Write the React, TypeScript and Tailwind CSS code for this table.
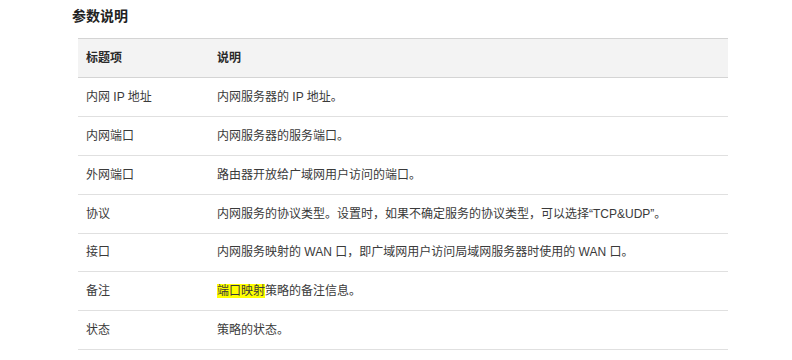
import React from 'react';

type Row = { name: string; desc: React.ReactNode };

const rows: Row[] = [
  { name: '内网 IP 地址', desc: '内网服务器的 IP 地址。' },
  { name: '内网端口', desc: '内网服务器的服务端口。' },
  { name: '外网端口', desc: '路由器开放给广域网用户访问的端口。' },
  { name: '协议', desc: '内网服务的协议类型。设置时，如果不确定服务的协议类型，可以选择“TCP&UDP”。' },
  { name: '接口', desc: '内网服务映射的 WAN 口，即广域网用户访问局域网服务器时使用的 WAN 口。' },
  {
    name: '备注',
    desc: (
      <>
        <span className="bg-[#ffff00]">端口映射</span>策略的备注信息。
      </>
    ),
  },
  { name: '状态', desc: '策略的状态。' },
];

export default function App() {
  return (
    <div
      className="w-[792px] h-[360px] bg-white text-[#3a3a3a] overflow-hidden"
      style={{ fontFamily: '"Liberation Sans", "Noto Sans CJK SC", sans-serif' }}
    >
      <h3 className="pl-[72px] pt-[8px] h-[38px] text-[14px] leading-[16px] font-bold text-[#222222]">参数说明</h3>
      <table className="ml-[78px] w-[650px] border-collapse text-[12px] leading-[16px]">
        <thead>
          <tr className="bg-[#f3f3f3] border-y border-[#d4d4d4]">
            <th className="w-[131px] h-[39px] pl-[8px] text-left font-semibold text-[#2a2a2a]">标题项</th>
            <th className="h-[39px] pl-[8px] text-left font-semibold text-[#2a2a2a]">说明</th>
          </tr>
        </thead>
        <tbody>
          {rows.map((r) => (
            <tr key={r.name} className="border-b border-[#e0e0e0]">
              <td className="h-[38.875px] pl-[8px] align-middle">{r.name}</td>
              <td className="h-[38.875px] pl-[8px] align-middle">{r.desc}</td>
            </tr>
          ))}
        </tbody>
      </table>
    </div>
  );
}
